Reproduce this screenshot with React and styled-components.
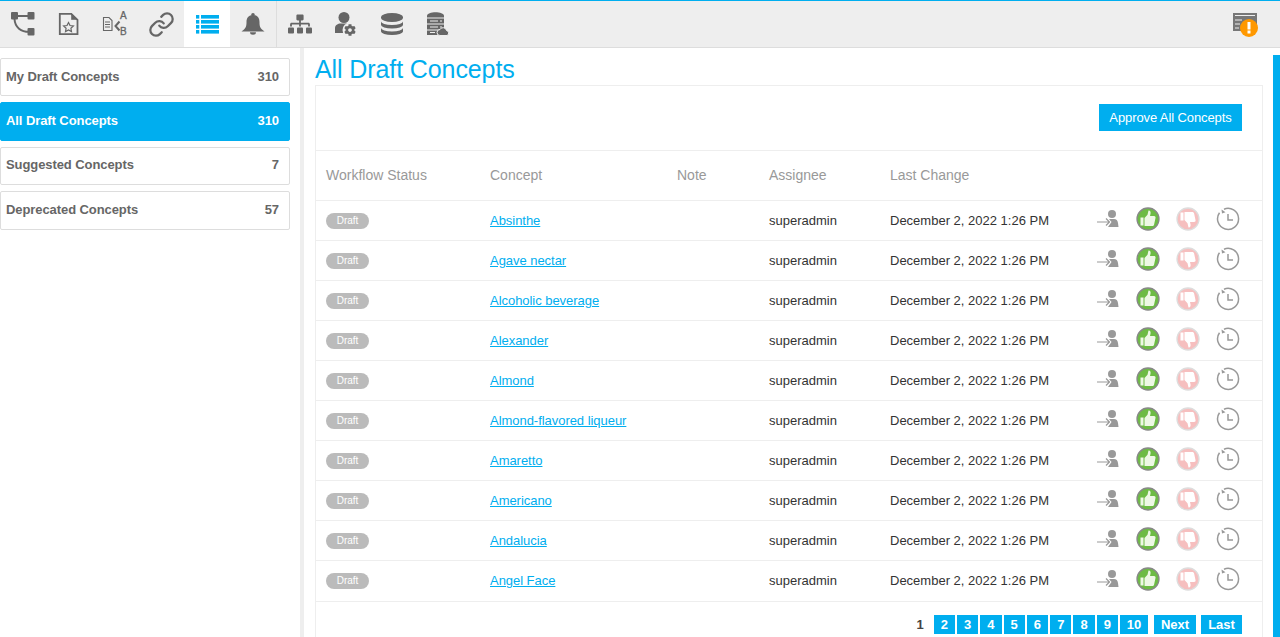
import React from 'react'
import styled, {createGlobalStyle} from 'styled-components'
import {FaSitemap, FaCog} from 'react-icons/fa'
import {Link} from 'lucide-react'

const blue = '#00aeef'

const GlobalStyle = createGlobalStyle`
  html, body {
    margin: 0;
    padding: 0;
    background: #fff;
    font-family: "Liberation Sans", Arial, sans-serif;
  }
`

const Page = styled.div`
  display: flex;
  flex-direction: column;
  height: 637px;
  overflow: hidden;
`

const TopBar = styled.div`
  display: flex;
  align-items: stretch;
  flex: none;
  height: 46px;
  background: #eee;
  border-top: 1px solid ${blue};
  border-bottom: 1px solid #ddd;
`

const ToolButton = styled.div`
  display: flex;
  align-items: center;
  justify-content: center;
  width: 46px;
  color: #666;
  background: ${props => props.$active ? '#fff' : 'transparent'};
  border-right: ${props => props.$divider ? '1px solid #ddd' : 'none'};
`

const AlertButton = styled(ToolButton)`
  margin-left: auto;
  width: 48px;
  margin-right: 10px;
`

const Body = styled.div`
  display: flex;
  flex: 1;
  min-height: 0;
`

const Sidebar = styled.div`
  display: flex;
  flex-direction: column;
  flex: none;
  gap: 6px;
  width: 290px;
  padding-top: 10px;
  margin-right: 10px;
`

const SideItem = styled.div`
  display: flex;
  align-items: center;
  justify-content: space-between;
  box-sizing: border-box;
  height: 38.4px;
  padding: 0 10px 2px 5px;
  font-size: 13px;
  font-weight: 700;
  letter-spacing: -0.08px;
  border-radius: 2px;
  color: ${props => props.$active ? '#fff' : '#666'};
  background: ${props => props.$active ? blue : '#fff'};
  border: 1px solid ${props => props.$active ? blue : '#ddd'};
`

const Gutter = styled.div`
  flex: none;
  width: 4px;
  background: #eee;
`

const Main = styled.div`
  flex: 1;
  min-width: 0;
  padding: 0 10px 0 11px;
`

const Title = styled.h1`
  margin: 0;
  height: 37px;
  padding-top: 5px;
  box-sizing: border-box;
  font-size: 25px;
  line-height: 32px;
  font-weight: 400;
  letter-spacing: -0.1px;
  color: ${blue};
`

const Card = styled.div`
  border: 1px solid #eee;
  border-bottom: none;
`

const CardHeader = styled.div`
  display: flex;
  justify-content: flex-end;
  align-items: flex-start;
  height: 64px;
  padding: 18px 20px 0 0;
  box-sizing: border-box;
`

const ApproveButton = styled.button`
  height: 27px;
  width: 143px;
  padding: 0;
  border: none;
  background: ${blue};
  color: #fff;
  font-family: inherit;
  font-size: 13px;
  font-weight: 400;
  letter-spacing: -0.1px;
`

const Row = styled.div`
  display: grid;
  grid-template-columns: 164px 187px 92px 121px 198px 160px;
  align-items: center;
  height: ${props => props.$head ? '50px' : '40px'};
  padding-left: 10px;
  padding-bottom: ${props => props.$head ? '2px' : '0'};
  border-top: 1px solid #eee;
  box-sizing: border-box;
  font-size: ${props => props.$head ? '14px' : '13px'};
  color: ${props => props.$head ? '#999' : '#333'};
`

const Badge = styled.span`
  display: inline-block;
  width: 43px;
  height: 16px;
  border-radius: 8px;
  background: #bbb;
  color: #fff;
  font-size: 10px;
  line-height: 16px;
  text-align: center;
`

const ConceptLink = styled.a`
  color: ${blue};
  text-decoration: underline;
  letter-spacing: -0.04px;
`

const Actions = styled.div`
  display: grid;
  grid-template-columns: repeat(4, 40px);
  justify-items: center;
  align-items: center;
  margin-bottom: 4px;
`

const Pager = styled.div`
  display: flex;
  justify-content: flex-end;
  align-items: center;
  gap: 2px;
  height: 46px;
  margin-top: 1px;
  padding: 0 20px 0 0;
  border-top: 1px solid #eee;
  box-sizing: border-box;
`

const PageCurrent = styled.span`
  margin-right: 8px;
  font-size: 13px;
  font-weight: 700;
  color: #444;
`

const PageLink = styled.span`
  display: flex;
  align-items: center;
  justify-content: center;
  height: 19px;
  width: ${props => props.$width || 21.3}px;
  margin-left: ${props => props.$gap || 0}px;
  background: ${blue};
  color: #fff;
  font-size: 13px;
  font-weight: 700;
`

const ScrollTrack = styled.div`
  flex: none;
  width: 7px;
  padding-top: 7px;
`

const ScrollThumb = styled.div`
  height: 100%;
  background: ${blue};
`

const WorkflowIcon = () => (
  <svg width="26" height="26" viewBox="0 0 26 26" fill="none">
    <path d="M5 5h16M4.500 8c.5 8 6 13.500 16.500 12.800" stroke="#666" strokeWidth="2" />
    <rect x="1" y="1" width="7" height="7.500" rx="1" fill="#666" />
    <rect x="17.500" y="1" width="7" height="7.500" rx="1" fill="#666" />
    <rect x="17.500" y="17" width="7" height="7.500" rx="1" fill="#666" />
  </svg>
)

const DocStarIcon = () => (
  <svg width="22" height="24" viewBox="0 0 22 24" fill="none" stroke="#666">
    <path d="M1.800 1.800h11.500l6.200 6v14.400H1.800z" strokeWidth="1.800" />
    <path d="M13.500 1.500l6 6h-6z" fill="#666" strokeWidth="0.600" />
    <path d="M10.500 10.500l1.500 3 3.400.5-2.500 2.300.6 3.300-3-1.600-3 1.600.6-3.300L5.600 14l3.400-.5z" strokeWidth="1.200" />
  </svg>
)

const DocAbIcon = () => (
  <svg width="26" height="26" viewBox="0 0 26 26" fill="none">
    <path d="M1.500 6.500h5.500l3 3v10H1.500z" stroke="#666" strokeWidth="1.100" />
    <path d="M3 11h5M3 13.500h5M3 16h5" stroke="#666" strokeWidth="1" />
    <path d="M17.500 10.500l-4 4.500 4 4.500" stroke="#666" strokeWidth="2" />
    <text x="18" y="8" fontSize="10" fontFamily="Liberation Sans" fill="#666" stroke="#666" strokeWidth="0.300">A</text>
    <text x="18" y="24" fontSize="10" fontFamily="Liberation Sans" fill="#666" stroke="#666" strokeWidth="0.300">B</text>
  </svg>
)

const ListIcon = () => (
  <svg width="23" height="19" viewBox="0 0 23 19" fill={blue}>
    {[0, 5, 10, 15].map(y => (
      <React.Fragment key={y}>
        <rect x="0" y={y} width="3.300" height="3.600" />
        <rect x="5" y={y} width="18" height="3.600" />
      </React.Fragment>
    ))}
  </svg>
)

const BellIcon = () => (
  <svg width="24" height="22" viewBox="0 0 24 22" fill="#666">
    <circle cx="12" cy="1.800" r="1.800" />
    <path d="M12 2C7.500 2 5.500 5 5.500 9c0 4-.5 5.500-2.500 7.500L.5 18.500h23L21 16.500c-2-2-2.500-3.500-2.500-7.500 0-4-2-7-6.500-7z" />
    <path d="M9 19.300h6a3 2.500 0 0 1-6 0z" />
  </svg>
)

const DatabaseIcon = () => (
  <svg width="22" height="23" viewBox="0 0 22 23" fill="#666">
    <path d="M0 4a11 4 0 0 1 22 0v1a11 4 0 0 1-22 0z" />
    <path d="M0 8.500a11 3.500 0 0 0 22 0v3.500a11 3.500 0 0 1-22 0z" />
    <path d="M0 15a11 3.500 0 0 0 22 0v3.500a11 3.500 0 0 1-22 0z" />
  </svg>
)

const UserGearIcon = () => (
  <svg width="24" height="24" viewBox="0 0 24 24">
    <circle cx="10" cy="5.500" r="5.500" fill="#666" />
    <path d="M1 21v-5c0-3 3-4.500 5.500-4.500h7c3 0 5 1.500 5 4.500v5z" fill="#666" />
    <circle cx="16" cy="18" r="7.500" fill="#eee" />
    <svg x="10" y="12" width="12" height="12" viewBox="0 0 512 512">
      <FaCog color="#666" size="512" />
    </svg>
  </svg>
)

const ServerCloudIcon = () => (
  <svg width="24" height="24" viewBox="0 0 24 24">
    <path d="M1 4c0-5 17-5 17 0v1.500H1z" fill="#666" />
    <rect x="1" y="6.500" width="17" height="5" fill="#666" />
    <rect x="1" y="12.500" width="17" height="5" fill="#666" />
    <rect x="1" y="18.500" width="17" height="4.500" fill="#666" />
    <path d="M4 9h8M14 9h2M4 15h8M14 15h2M4 20.500h5" stroke="#eee" strokeWidth="1" />
    <path d="M14 23.500a3 3 0 0 1 0-6 3.500 3.500 0 0 1 6.500 1 2.600 2.600 0 0 1 .5 5z" fill="#666" stroke="#eee" strokeWidth="1" />
  </svg>
)

const AlertIcon = () => (
  <svg width="26" height="28" viewBox="0 0 26 28">
    <rect x="0" y="3" width="24" height="18" fill="#777" />
    <path d="M2 5.500h20M2 10h7M2 14h5M2 18h4" stroke="#eee" strokeWidth="1" />
    <circle cx="16" cy="18" r="9" fill="#ff9800" />
    <rect x="14.500" y="12" width="3" height="7.500" fill="#fff" />
    <rect x="14.500" y="20.500" width="3" height="3" fill="#fff" />
  </svg>
)

const AssignIcon = () => (
  <svg width="22" height="18" viewBox="0 0 22 18">
    <circle cx="15" cy="4" r="4" fill="#999" />
    <path d="M12 9h5c2.500 0 3.500 1.500 4 4l.5 4H11l3-4.500z" fill="#999" />
    <path d="M9 8.500l3.500 3.500L9 15.500" fill="none" stroke="#fff" strokeWidth="3" />
    <path d="M0 12h12M9 8.500l3.500 3.500L9 15.500" fill="none" stroke="#999" strokeWidth="1.200" />
  </svg>
)

const thumbPath = 'M5 11.500h3v8H5zM9 12l3-3.200 1-4.300c1.700-.3 2.400 1.300 2 3.200l-.5 2.300h4c1.300 0 1.800 1 1.500 2l-1.400 6.500c-.2 1-1 1.500-2 1.500H9z'

const ThumbIcon = ({down}) => (
  <svg width="24" height="24" viewBox="0 0 24 24">
    <circle cx="12" cy="12" r="11" fill={down ? '#f6bfbf' : '#6dbb45'} stroke={down ? '#ddd' : '#888'} strokeWidth="1.300" />
    <g transform={down ? 'matrix(1 0 0 -1 0 24)' : undefined}>
      <path d={thumbPath} fill={down ? '#fff' : '#eef8e6'} transform="translate(-.5 -1)" />
    </g>
  </svg>
)

const ClockIcon = () => (
  <svg width="24" height="24" viewBox="0 0 24 24" fill="none" stroke="#999" strokeWidth="1.500">
    <path d="M8 2.200A10.500 10.500 0 1 1 3.500 5.800" />
    <path d="M5.500 2.500l.5 4 3.500-1.200z" strokeWidth="0" fill="#999" />
    <path d="M12 7v6h5" />
  </svg>
)

const toolIcons = [
  <WorkflowIcon />,
  <DocStarIcon />,
  <DocAbIcon />,
  <Link size={27} strokeWidth={2} />,
  <ListIcon />,
  <BellIcon />,
  <FaSitemap size={24} />,
  <UserGearIcon />,
  <DatabaseIcon />,
  <ServerCloudIcon />,
]

const sideItems = [
  {label: 'My Draft Concepts', count: 310},
  {label: 'All Draft Concepts', count: 310, active: true},
  {label: 'Suggested Concepts', count: 7},
  {label: 'Deprecated Concepts', count: 57},
]

const concepts = [
  'Absinthe',
  'Agave nectar',
  'Alcoholic beverage',
  'Alexander',
  'Almond',
  'Almond-flavored liqueur',
  'Amaretto',
  'Americano',
  'Andalucia',
  'Angel Face',
]

export default function App() {
  return (
    <Page>
      <GlobalStyle />
      <TopBar>
        {toolIcons.map((icon, i) => (
          <ToolButton key={i} $active={i === 4} $divider={i === 5}>{icon}</ToolButton>
        ))}
        <AlertButton><AlertIcon /></AlertButton>
      </TopBar>
      <Body>
        <Sidebar>
          {sideItems.map(item => (
            <SideItem key={item.label} $active={item.active}>
              <span>{item.label}</span>
              <span>{item.count}</span>
            </SideItem>
          ))}
        </Sidebar>
        <Gutter />
        <Main>
          <Title>All Draft Concepts</Title>
          <Card>
            <CardHeader>
              <ApproveButton>Approve All Concepts</ApproveButton>
            </CardHeader>
            <Row $head>
              <span>Workflow Status</span>
              <span>Concept</span>
              <span>Note</span>
              <span>Assignee</span>
              <span>Last Change</span>
            </Row>
            {concepts.map(name => (
              <Row key={name}>
                <span><Badge>Draft</Badge></span>
                <span><ConceptLink href="#">{name}</ConceptLink></span>
                <span />
                <span>superadmin</span>
                <span>December 2, 2022 1:26 PM</span>
                <Actions>
                  <AssignIcon />
                  <ThumbIcon />
                  <ThumbIcon down />
                  <ClockIcon />
                </Actions>
              </Row>
            ))}
            <Pager>
              <PageCurrent>1</PageCurrent>
              {[2, 3, 4, 5, 6, 7, 8, 9].map(n => <PageLink key={n}>{n}</PageLink>)}
              <PageLink $width={28}>10</PageLink>
              <PageLink $width={42} $gap={4}>Next</PageLink>
              <PageLink $width={41} $gap={3}>Last</PageLink>
            </Pager>
          </Card>
        </Main>
        <ScrollTrack><ScrollThumb /></ScrollTrack>
      </Body>
    </Page>
  )
}
